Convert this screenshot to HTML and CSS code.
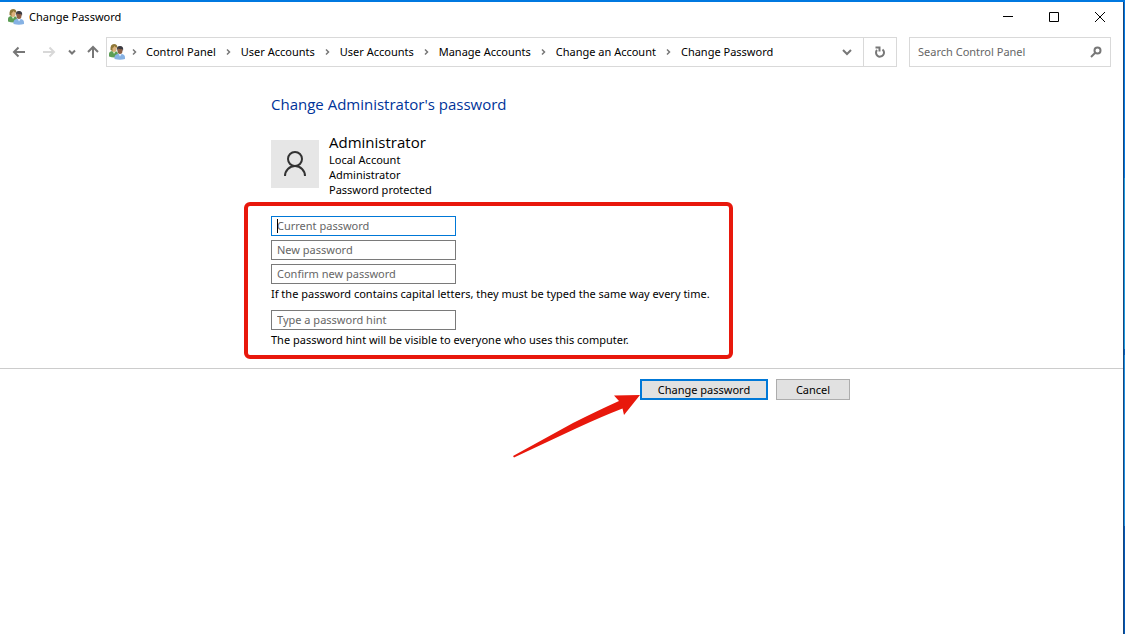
FILE: index.html
```
<!DOCTYPE html>
<html lang="en">
<head>
  <meta charset="UTF-8">
  <meta name="viewport" content="width=device-width, initial-scale=1.0">
  <title>Change Password</title>
  <link rel="stylesheet" href="styles.css">
</head>
<body>
  <svg class="symbols" aria-hidden="true">
    <symbol id="users" viewBox="0 0 16 16">
      <path d="M0 12.500V10q0-2.500 3-3h3.500q2.500.5 2.500 3v3q-4.500 1-9-.5z" fill="#5c9e55"/>
      <path d="M3.500 7l1.500 3 2-3z" fill="#dcefd2"/>
      <ellipse cx="5" cy="4.500" rx="2.500" ry="3.500" fill="#dcb27c"/>
      <path d="M1.500 6Q1 0 5 0q3.500 0 3.500 4-2-.5-3-2Q4.500 4 3.500 4v3z" fill="#8f7838"/>
      <path d="M5.500 15v-1.500q0-3 3-3.500h4.500q3 .5 3 3.500V15q-5 1.500-10.500 0z" fill="#86b2e4"/>
      <path d="M9.500 9.500l1.500 3 2-3z" fill="#e6f2ff"/>
      <ellipse cx="11" cy="6.500" rx="2.500" ry="3.500" fill="#8e6146"/>
      <path d="M8 7Q7 2 11 2t3 5l-1-2q-2 .5-4-.5z" fill="#3c3a40"/>
    </symbol>
    <symbol id="chevron" viewBox="0 0 5 8">
      <path d="M1 1.500L3.500 4 1 6.500" fill="none" stroke="#777" stroke-width="1.500"/>
    </symbol>
  </svg>

  <div class="window">
    <header class="titlebar">
      <svg class="icon"><use href="#users"/></svg>
      <h1>Change Password</h1>
      <div class="window-buttons">
        <button type="button" aria-label="Minimize">
          <svg viewBox="0 0 12 12"><path d="M1 5.500h10"/></svg>
        </button>
        <button type="button" aria-label="Maximize">
          <svg viewBox="0 0 12 12"><path d="M1.500 1.500h9v9h-9z"/></svg>
        </button>
        <button type="button" aria-label="Close">
          <svg viewBox="0 0 12 12"><path d="M1 1l10 10M11 1L1 11"/></svg>
        </button>
      </div>
    </header>

    <nav class="navbar">
      <div class="history">
        <button type="button" class="back" aria-label="Back">
          <svg viewBox="0 0 14 14"><path d="M13 7H2M6.500 2.500L2 7l4.500 4.500"/></svg>
        </button>
        <button type="button" class="forward" aria-label="Forward" disabled>
          <svg viewBox="0 0 14 14"><path d="M1 7h11M7.500 2.500L12 7l-4.500 4.500"/></svg>
        </button>
        <button type="button" class="recent" aria-label="Recent locations">
          <svg viewBox="0 0 8 8"><path d="M1 2.500l3 3 3-3"/></svg>
        </button>
        <button type="button" class="up" aria-label="Up">
          <svg viewBox="0 0 14 14"><path d="M7 13V2M2 7l5-5 5 5"/></svg>
        </button>
      </div>

      <div class="address">
        <svg class="icon"><use href="#users"/></svg>
        <svg class="chevron"><use href="#chevron"/></svg>
        <a href="#">Control Panel</a>
        <svg class="chevron"><use href="#chevron"/></svg>
        <a href="#">User Accounts</a>
        <svg class="chevron"><use href="#chevron"/></svg>
        <a href="#">User Accounts</a>
        <svg class="chevron"><use href="#chevron"/></svg>
        <a href="#">Manage Accounts</a>
        <svg class="chevron"><use href="#chevron"/></svg>
        <a href="#">Change an Account</a>
        <svg class="chevron"><use href="#chevron"/></svg>
        <a href="#">Change Password</a>
        <div class="address-buttons">
          <button type="button" class="previous" aria-label="Previous locations">
            <svg viewBox="0 0 12 12"><path d="M2 4l4 4 4-4"/></svg>
          </button>
          <button type="button" class="refresh" aria-label="Refresh">
            <svg viewBox="0 0 12 12"><path d="M8.500 3.500a4 4 0 1 1-5.500.5M1.500 1.500h4v4"/></svg>
          </button>
        </div>
      </div>

      <div class="search">
        <input type="text" placeholder="Search Control Panel" aria-label="Search Control Panel">
        <svg viewBox="0 0 12 12"><circle cx="7.500" cy="4.500" r="3"/><path d="M5.500 6.500L1 11"/></svg>
      </div>
    </nav>

    <form>
      <main class="content">
        <h2>Change Administrator's password</h2>

        <div class="account">
          <div class="avatar">
            <svg viewBox="0 0 24 26"><circle cx="12" cy="8" r="7"/><path d="M2 25a10 10 0 0 1 20 0"/></svg>
          </div>
          <div>
            <h3>Administrator</h3>
            <p>Local Account</p>
            <p>Administrator</p>
            <p>Password protected</p>
          </div>
        </div>

        <div class="fields">
          <div class="current">
            <input type="password" placeholder="Current password" aria-label="Current password">
            <span class="caret"></span>
          </div>
          <input type="password" placeholder="New password" aria-label="New password">
          <input type="password" placeholder="Confirm new password" aria-label="Confirm new password">
          <p>If the password contains capital letters, they must be typed the same way every time.</p>
          <input type="text" class="hint" placeholder="Type a password hint" aria-label="Type a password hint">
          <p>The password hint will be visible to everyone who uses this computer.</p>
          <div class="highlight"></div>
        </div>
      </main>

      <footer>
        <div class="actions">
          <div class="submit">
            <button type="button" class="primary">Change password</button>
            <svg class="arrow" viewBox="0 0 128 64"><path d="M0 61L60 28Q86 15 106 6l-5-5.500L127 0 111 20l-1.500-6.500Q90 21 64 33L1 62.500z"/></svg>
          </div>
          <button type="button" class="cancel">Cancel</button>
        </div>
      </footer>
    </form>
  </div>
</body>
</html>
```
FILE: styles.css
```
* {
  box-sizing: border-box;
}

body {
  margin: 0;
  padding: 2px 1px 0 0;
  min-height: 100vh;
  display: flex;
  background: linear-gradient(#0078e0 0 28%, #1b9be0 28% 55%, #0060c0 55% 56%, #1b8fe0 56% 83%, #0058b8 83%);
  font-family: "Noto Sans", "Open Sans", sans-serif;
  font-size: 11px;
  line-height: 15px;
  color: #000;
}

h1,
h2,
h3,
p {
  margin: 0;
  font-weight: normal;
}

button,
input {
  font: inherit;
  color: inherit;
  border-radius: 0;
}

svg {
  display: block;
  fill: none;
  stroke: currentColor;
}

.symbols {
  position: absolute;
  width: 0;
  height: 0;
}

.symbols path,
.symbols ellipse {
  stroke: none;
}

#chevron path {
  stroke: #777;
}

.window {
  flex: 1;
  background: #fff;
  border-right: 1px solid #17457c;
}

.icon {
  width: 16px;
  height: 16px;
  flex: none;
}

/* title bar */
.titlebar {
  display: flex;
  align-items: center;
  height: 30px;
  padding-left: 8px;
  gap: 5px;
}

.titlebar h1 {
  padding-bottom: 2px;
  font-size: 11px;
}

.window-buttons {
  display: flex;
  margin-left: auto;
}

.window-buttons button,
.history button,
.address-buttons button {
  display: flex;
  align-items: center;
  justify-content: center;
  padding: 0;
  border: none;
  background: none;
}

.window-buttons button {
  width: 46px;
  height: 28px;
}

.window-buttons svg {
  width: 12px;
  height: 12px;
}

/* navigation */
.navbar {
  display: flex;
  padding: 5px 12px 0 12px;
}

.history {
  display: flex;
  align-items: center;
  width: 94px;
  color: #777;
}

.history svg {
  width: 14px;
  height: 14px;
  stroke-width: 2;
}

.history .forward {
  margin-left: 16px;
  color: #d8d8d8;
}

.history .recent {
  margin-left: 12px;
}

.history .recent svg {
  width: 8px;
  height: 8px;
}

.history .up {
  margin-left: auto;
  margin-right: 6px;
}

.address {
  flex: 1;
  display: flex;
  align-items: center;
  height: 30px;
  padding-left: 2px;
  border: 1px solid #d9d9d9;
}

.address a {
  padding-bottom: 2px;
  color: inherit;
  text-decoration: none;
  white-space: nowrap;
}

.chevron {
  width: 5px;
  height: 8px;
  margin: 0 10px;
  flex: none;
}

.icon + .chevron {
  margin: 0 9px 0 7px;
}

.address-buttons {
  display: flex;
  align-self: stretch;
  margin-left: auto;
  color: #777;
}

.address-buttons button {
  width: 32px;
}

.address-buttons svg {
  width: 12px;
  height: 12px;
  stroke-width: 2;
}

.address-buttons .refresh {
  width: 33px;
  border-left: 1px solid #d9d9d9;
}

.search {
  display: flex;
  align-items: center;
  width: 202px;
  margin-left: 12px;
  padding: 0 8px;
  border: 1px solid #d9d9d9;
  color: #777;
}

.search input {
  flex: 1;
  min-width: 0;
  padding: 0 0 2px;
  border: none;
  outline: none;
}

.search svg {
  width: 12px;
  height: 12px;
  stroke-width: 2;
}

::placeholder {
  color: #666;
  opacity: 1;
}

/* content */
.content,
.actions {
  width: 100%;
  max-width: 581px;
  margin: 0 auto;
}

.content {
  padding: 26px 0 21px;
}

.content h2,
.account h3 {
  font-family: "Open Sans", "Noto Sans", sans-serif;
  font-size: 15px;
}

.content h2 {
  line-height: 22px;
  color: #003399;
}

.account {
  display: flex;
  align-items: flex-start;
  gap: 10px;
  margin-top: 18px;
}

.account h3 {
  line-height: 19px;
}

.avatar {
  display: flex;
  align-items: center;
  justify-content: center;
  width: 48px;
  height: 48px;
  margin-top: 7px;
  background: #e6e6e6;
  color: #333;
}

.avatar svg {
  width: 24px;
  height: 26px;
  stroke-width: 2;
}

.fields {
  position: relative;
  display: flex;
  flex-direction: column;
  align-items: flex-start;
  gap: 4px;
  margin-top: 19px;
}

.fields p {
  margin-top: -2px;
}

.fields input {
  display: block;
  width: 185px;
  height: 20px;
  padding: 0 5px 2px;
  border: 1px solid #7a7a7a;
  outline: none;
}

.fields .hint {
  margin-top: 5px;
}

.fields .current {
  position: relative;
}

.fields .current input {
  border-color: #0078d7;
}

.caret {
  position: absolute;
  top: 3px;
  left: 6px;
  width: 1px;
  height: 14px;
  background: #000;
}

.highlight {
  position: absolute;
  top: -14px;
  left: -27px;
  width: 489px;
  bottom: -12px;
  border: 4px solid #e8180c;
  border-radius: 6px;
  pointer-events: none;
}

/* footer */
footer {
  padding-top: 10px;
  border-top: 1px solid #ccc;
}

.actions {
  display: flex;
  justify-content: flex-end;
  gap: 8px;
  padding-right: 2px;
}

.actions button {
  display: block;
  height: 21px;
  padding: 0;
  border: 1px solid #adadad;
  background: #e1e1e1;
}

.actions .primary {
  width: 128px;
  border: 2px solid #0078d7;
}

.actions .cancel {
  width: 74px;
}

.submit {
  position: relative;
}

.arrow {
  position: absolute;
  top: 16px;
  right: 127px;
  width: 128px;
  height: 64px;
  fill: #e8180c;
  stroke: none;
}
```
